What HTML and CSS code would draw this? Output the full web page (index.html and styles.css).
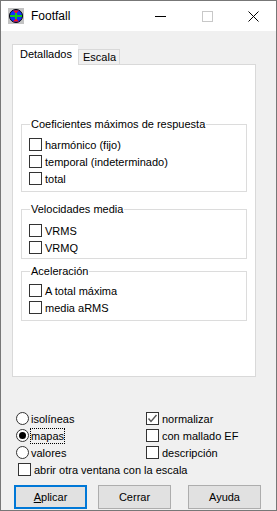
FILE: index.html
```html
<!DOCTYPE html>
<html lang="es">
<head>
    <meta charset="UTF-8">
    <title>Footfall</title>
    <link rel="stylesheet" href="styles.css">
</head>
<body>

<div class="window">
    <div class="titlebar">
        <svg class="app-icon" width="16" height="16" viewBox="0 0 16 16">
            <rect x="0" y="0" width="16" height="16" fill="#c3c3c3"/>
            <circle cx="8" cy="8" r="6.5" fill="#1030ff" stroke="#000" stroke-width="1"/>
            <path d="M5 2.6 L8 5.5 L11 2.6 Z" fill="#ff1010"/>
            <path d="M5 13.4 L8 10.5 L11 13.4 Z" fill="#ff1010"/>
            <rect x="2" y="7" width="12" height="2" fill="#18c818"/>
            <rect x="7" y="5" width="2" height="6" fill="#18c818"/>
        </svg>
        <span class="title">Footfall</span>
        <div class="caption-buttons">
            <span class="cap-min"></span>
            <span class="cap-max"></span>
            <svg class="cap-close" width="11" height="11" viewBox="0 0 11 11">
                <path d="M0.5 0.5 L10.5 10.5 M10.5 0.5 L0.5 10.5" stroke="#000" stroke-width="1"/>
            </svg>
        </div>
    </div>

    <div class="client">
        <!-- pestañas -->
        <div class="tabs">
            <div class="tab active">Detallados</div>
            <div class="tab">Escala</div>
        </div>
        <div class="tab-panel">
            <fieldset class="group g1">
                <legend>Coeficientes máximos de respuesta</legend>
                <div class="check"><span class="cb"></span>harmónico (fijo)</div>
                <div class="check"><span class="cb"></span>temporal (indeterminado)</div>
                <div class="check"><span class="cb"></span>total</div>
            </fieldset>
            <fieldset class="group g2">
                <legend>Velocidades media</legend>
                <div class="check"><span class="cb"></span>VRMS</div>
                <div class="check"><span class="cb"></span>VRMQ</div>
            </fieldset>
            <fieldset class="group g3">
                <legend>Aceleración</legend>
                <div class="check"><span class="cb"></span>A total máxima</div>
                <div class="check"><span class="cb"></span>media aRMS</div>
            </fieldset>
        </div>

        <!-- opciones -->
        <div class="options">
            <div class="opt-col">
                <div class="check"><span class="rb"></span>isolíneas</div>
                <div class="check"><span class="rb on"></span><span class="focus">mapas</span></div>
                <div class="check"><span class="rb"></span>valores</div>
            </div>
            <div class="opt-col right">
                <div class="check"><span class="cb checked">
                    <svg width="11" height="11" viewBox="0 0 11 11"><path d="M1.5 5.5 L4 8.5 L9.5 2" fill="none" stroke="#555" stroke-width="1.4"/></svg>
                </span>normalizar</div>
                <div class="check"><span class="cb"></span>con mallado EF</div>
                <div class="check"><span class="cb"></span>descripción</div>
            </div>
        </div>
        <div class="check abrir"><span class="cb"></span>abrir otra ventana con la escala</div>

        <div class="buttons">
            <button class="default"><u>A</u>plicar</button>
            <button>Cerrar</button>
            <button>Ayuda</button>
        </div>
    </div>
</div>

</body>
</html>
```

FILE: styles.css
```css
* {
    box-sizing: border-box;
}
body {
    margin: 0;
    font-family: "Liberation Sans", Arial, sans-serif;
    font-size: 11px;
    color: #000;
}
.window {
    width: 277px;
    height: 511px;
    border: 1px solid #777;
    background: #f0f0f0;
    display: flex;
    flex-direction: column;
}
.titlebar {
    height: 30px;
    background: #fff;
    display: flex;
    align-items: center;
    padding-left: 7px;
}
.app-icon {
    margin-right: 7px;
}
.title {
    font-size: 12px;
}
.caption-buttons {
    margin-left: auto;
    display: flex;
    align-items: center;
}
.cap-min {
    width: 11px;
    height: 1px;
    background: #000;
    margin-right: 36px;
}
.cap-max {
    width: 11px;
    height: 11px;
    border: 1px solid #c8c8c8;
    margin-right: 35px;
}
.cap-close {
    margin-right: 17px;
}
.client {
    flex: 1;
    padding: 13px 0 0 11px;
}
.tabs {
    display: flex;
    align-items: flex-end;
    height: 20px;
}
.tab {
    border: 1px solid #d9d9d9;
    border-bottom: none;
    padding: 0 3px 0 4px;
    height: 15px;
    line-height: 14px;
    background: #f0f0f0;
}
.tab.active {
    background: #fff;
    height: 21px;
    line-height: 19px;
    padding: 0 6px 0 7px;
    margin-bottom: -1px;
    position: relative;
    z-index: 1;
    border-right: none;
}
.tab-panel {
    width: 244px;
    height: 313px;
    background: #fff;
    border: 1px solid #d9d9d9;
    padding: 51px 0 0 8px;
}
.group {
    width: 226px;
    margin: 0;
    border: 1px solid #dcdcdc;
    padding: 4px 0 0 7px;
}
.group legend {
    padding: 0 1px;
    margin-left: 1px;
    line-height: 16px;
}
.g1 {
    height: 76px;
}
.g2 {
    height: 58px;
    margin-top: 9px;
    padding-top: 5px;
}
.g3 {
    height: 58px;
    margin-top: 4px;
    padding-top: 3px;
}
.check {
    display: flex;
    align-items: center;
    height: 17px;
    white-space: nowrap;
}
.cb {
    width: 13px;
    height: 13px;
    border: 1px solid #333;
    background: #fff;
    margin-right: 3px;
    flex: none;
    display: flex;
    align-items: center;
    justify-content: center;
}
.rb {
    width: 13px;
    height: 13px;
    border: 1px solid #333;
    border-radius: 50%;
    background: #fff;
    margin-right: 2px;
    flex: none;
    display: flex;
    align-items: center;
    justify-content: center;
}
.rb.on::after {
    content: "";
    width: 7px;
    height: 7px;
    border-radius: 50%;
    background: #000;
}
.focus {
    outline: 1px dotted #000;
    outline-offset: 0;
    line-height: 14px;
}
.options {
    display: flex;
    margin-top: 33px;
    padding-left: 4px;
}
.opt-col {
    width: 138px;
}
.abrir {
    margin-left: 6px;
}
.buttons {
    display: flex;
    gap: 11px;
    margin-top: 7px;
    margin-left: 2px;
}
button {
    font-family: inherit;
    font-size: 11px;
    width: 73px;
    height: 24px;
    padding: 0;
    border: 1px solid #adadad;
    background: #e1e1e1;
    color: #000;
}
button + button + button {
    margin-left: 6px;
}
button.default {
    border: 2px solid #0078d7;
}
button u {
    text-decoration: underline;
}
```
